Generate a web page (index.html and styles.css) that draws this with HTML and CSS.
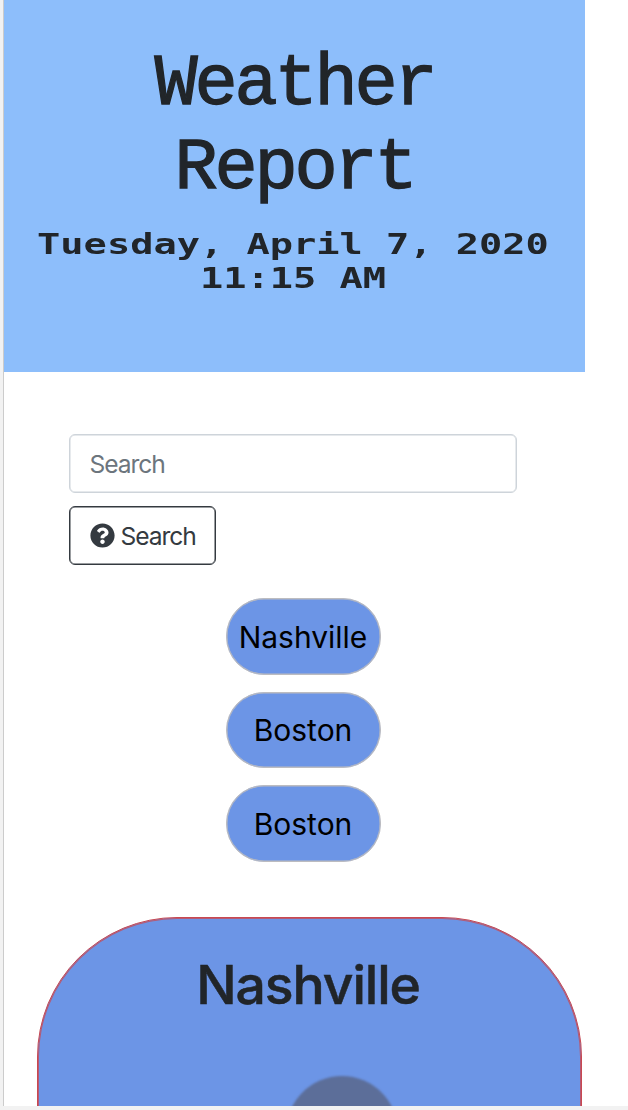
FILE: index.html
```html
<!DOCTYPE html>
<html lang="en">
<head>
<meta charset="utf-8">
<title>Weather Report</title>
<link rel="stylesheet" href="styles.css">
</head>
<body>
<main class="page">
  <header class="hero">
    <h1 class="title">Weather<br>Report</h1>
    <p class="date">Tuesday, April 7, 2020<br>11:15 AM</p>
  </header>
  <form class="search">
    <input class="field" type="text" placeholder="Search" aria-label="Search">
    <button class="submit" type="button">
      <svg class="icon" viewBox="0 0 512 512" aria-hidden="true"><path fill="currentColor" d="M504 256c0 137-111 248-248 248S8 393 8 256C8 119.100 119 8 256 8s248 111.100 248 248zM262.700 90c-54.500 0-89.300 23-116.500 63.800-3.500 5.300-2.400 12.400 2.700 16.300l34.700 26.300c5.200 3.900 12.600 3 16.700-2.100 17.900-22.700 30.100-35.800 57.300-35.800 20.400 0 45.700 13.100 45.700 33 0 15-12.400 22.700-32.500 34C247.100 238.500 216 255 216 296v4c0 6.600 5.400 12 12 12h56c6.600 0 12-5.400 12-12v-1.300c0-28.500 83.200-29.600 83.200-106.700 0-58-60.200-102-116.500-102zM256 338c-25.400 0-46 20.600-46 46s20.600 46 46 46 46-20.600 46-46-20.600-46-46-46z"/></svg>
      <span>Search</span>
    </button>
  </form>
  <nav class="cities">
    <button class="city" type="button">Nashville</button>
    <button class="city" type="button">Boston</button>
    <button class="city" type="button">Boston</button>
  </nav>
  <section class="card">
    <h2 class="place">Nashville</h2>
    <div class="cloud"></div>
  </section>
</main>
</body>
</html>
```
FILE: styles.css
```css
* { box-sizing: border-box; }
body {
  margin: 0;
  height: 1110px;
  overflow: hidden;
  background: #f2f2f2;
  font-family: Inter, "Liberation Sans", sans-serif;
  color: #212529;
}
.page {
  height: 1106px;
  margin-left: 3px;
  border-left: 1px solid #ccc;
  background: #fff;
  overflow: hidden;
}
.hero {
  width: 581px;
  height: 372px;
  padding-top: 43px;
  background: #8dbefb;
  text-align: center;
}
.title {
  margin: 0;
  font: 400 72px/84px "Liberation Mono", monospace;
  letter-spacing: -3.2px;
  -webkit-text-stroke: 1.3px #212529;
}
.date {
  margin: 17px 3px 0 0;
  font: 700 28px/34px "DejaVu Sans Mono", monospace;
  transform: scaleX(1.38);
  white-space: nowrap;
}
.search {
  display: flex;
  flex-direction: column;
  align-items: flex-start;
  gap: 13px;
  margin: 62px 0 0 65px;
}
.field, .submit {
  height: 59px;
  padding: 0 19.5px;
  border: 1px solid #ced4da;
  border-radius: 6px;
  background: #fff;
  box-shadow: inset 0 0 0 0.5px #ced4da;
  font: 400 24.6px/36px Inter, sans-serif;
  letter-spacing: -1.05px;
}
.field { width: 448px; }
.field::placeholder { color: #6c757d; opacity: 1; }
.submit {
  display: flex;
  align-items: center;
  gap: 6px;
  width: 147px;
  border-color: #343a40;
  box-shadow: inset 0 0 0 0.5px #343a40;
  color: #343a40;
}
.icon { width: 25px; height: 25px; flex: none; }
.cities {
  display: flex;
  flex-direction: column;
  gap: 17px;
  width: 155px;
  margin: 33px 0 0 222px;
}
.city {
  height: 76.500px;
  padding: 1px 1px 0 0;
  border: 1px solid #bcbcc0;
  border-radius: 38px;
  background: #6c95e6;
  box-shadow: inset 0 0 0 0.5px #bcbcc0;
  color: #000;
  font: 400 30px/36px Inter, sans-serif;
}
.card {
  width: 545px;
  height: 400px;
  margin: 55px 0 0 33px;
  padding-top: 34px;
  border: 1px solid #c94850;
  border-radius: 140px;
  background: #6c95e6;
  box-shadow: inset 0 0 0 1px #b55a75;
}
.place {
  margin: 0 3px 0 0;
  font: 500 53.5px/66px Inter, sans-serif;
  letter-spacing: -1.1px;
  -webkit-text-stroke: 0.5px #212529;
  text-align: center;
}
.cloud {
  width: 112px;
  height: 112px;
  margin: 58px 0 0 248px;
  border-radius: 50%;
  background: #5c6e99;
  filter: blur(1px);
}
```
